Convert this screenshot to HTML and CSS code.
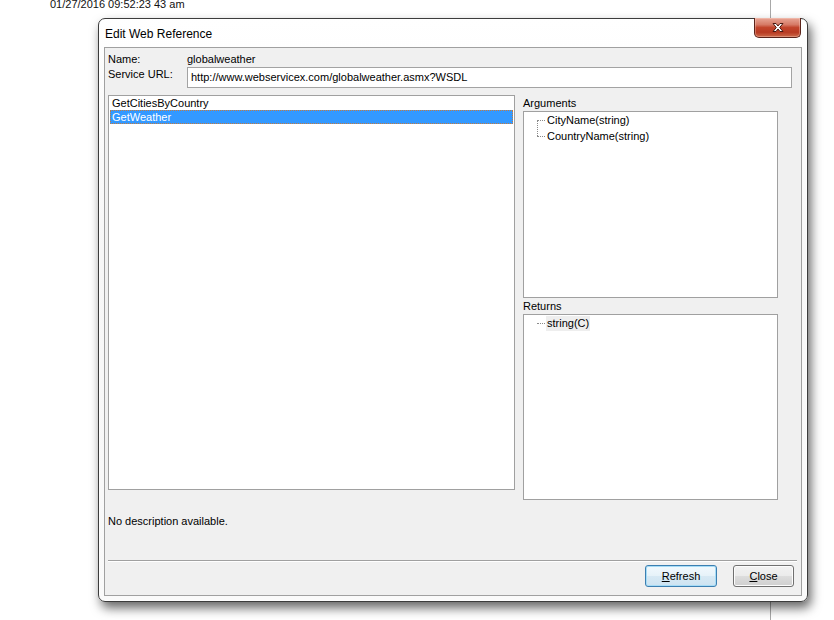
FILE: index.html
```html
<!DOCTYPE html>
<html>
<head>
<meta charset="utf-8">
<link rel="stylesheet" href="styles.css">
</head>
<body>
<div class="desktop">
  <div class="stamp">01/27/2016 09:52:23 43 am</div>
  <div class="rightpane"></div>
  <div class="window">
    <div class="titlebar">
      <span class="title">Edit Web Reference</span>
      <div class="xbtn">
        <svg width="14" height="11" viewBox="0 0 14 11">
          <path d="M2 1.5 L5 1.5 L7 4 L9 1.5 L12 1.5 L8.7 5.5 L12 9.5 L9 9.5 L7 7 L5 9.5 L2 9.5 L5.3 5.5 Z" fill="#fff" stroke="#4a1a12" stroke-width="1" stroke-linejoin="round"/>
        </svg>
      </div>
    </div>
    <div class="client">
      <div class="row name-row"><span class="lbl">Name:</span><span class="val">globalweather</span></div>
      <div class="row url-row"><span class="lbl">Service URL:</span><div class="input">http://www.webservicex.com/globalweather.asmx?WSDL</div></div>
      <div class="main">
        <div class="list">
          <div class="item">GetCitiesByCountry</div>
          <div class="item sel">GetWeather</div>
        </div>
        <div class="side">
          <div class="cap">Arguments</div>
          <div class="tree args">
            <div class="node first"><span class="txt">CityName(string)</span></div>
            <div class="node last"><span class="txt">CountryName(string)</span></div>
          </div>
          <div class="cap">Returns</div>
          <div class="tree rets">
            <div class="node only"><span class="txt hl">string(C)</span></div>
          </div>
        </div>
      </div>
      <div class="desc">No description available.</div>
      <div class="sep"></div>
      <div class="buttons">
        <div class="btn default"><u>R</u>efresh</div>
        <div class="btn close"><u>C</u>lose</div>
      </div>
    </div>
  </div>
</div>
</body>
</html>
```

FILE: styles.css
```css
html, body {
  margin: 0;
  padding: 0;
  background: #ffffff;
}
.desktop {
  position: relative;
  width: 834px;
  height: 620px;
  overflow: hidden;
  font-family: "Liberation Sans", Arial, sans-serif;
  font-size: 11px;
  color: #000;
}
.stamp {
  margin: -2px 0 0 50px;
  font-family: "Liberation Sans", Arial, sans-serif;
  font-size: 11px;
  line-height: 12px;
  color: #111;
}
.rightpane {
  position: absolute;
  left: 770px;
  top: 0;
  width: 64px;
  height: 620px;
  border-left: 1px solid #a8a8a8;
  background: #ffffff;
}
.window {
  position: absolute;
  left: 98px;
  top: 18px;
  width: 710px;
  height: 584px;
  box-sizing: border-box;
  border: 1px solid #3c3c3c;
  border-radius: 7px;
  padding: 0 5px 5px 5px;
  background: linear-gradient(180deg, #ffffff 0%, #f7f7f7 40%, #fafafa 100%);
  box-shadow: 3px 6px 11px rgba(0, 0, 0, 0.6), 0 0 0 1px rgba(255,255,255,0.6) inset;
}
.titlebar {
  height: 28px;
  display: flex;
  align-items: center;
  padding-left: 1px;
}
.title {
  font-family: "Liberation Sans", Arial, sans-serif;
  font-size: 12px;
  color: #000;
  margin-top: 1px;
}
.xbtn {
  position: absolute;
  top: -1px;
  right: 6px;
  width: 47px;
  height: 20px;
  box-sizing: border-box;
  border: 1px solid #5b231a;
  border-top: none;
  border-radius: 0 0 5px 5px;
  background: linear-gradient(180deg, #e8a696 0%, #d67a66 35%, #c2452c 50%, #b83a22 75%, #cc6a4a 100%);
  display: flex;
  align-items: center;
  justify-content: center;
  box-shadow: inset 0 0 0 1px rgba(255, 220, 210, 0.35);
}
.client {
  height: 549px;
  box-sizing: border-box;
  border: 1px solid #a0a0a0;
  background: #f0f0f0;
  padding: 0 4px 0 3px;
  display: flex;
  flex-direction: column;
}
.row {
  display: flex;
  align-items: flex-start;
}
.lbl {
  width: 79px;
  flex: none;
  line-height: 14px;
}
.name-row {
  margin-top: 4px;
  line-height: 14px;
}
.url-row {
  margin-top: 1px;
}
.input {
  flex: 1;
  margin-right: 5px;
  height: 21px;
  box-sizing: border-box;
  border: 1px solid #a3a3a3;
  background: #fff;
  padding: 0 3px;
  line-height: 19px;
  font-size: 11px;
}
.main {
  margin-top: 7px;
  display: flex;
  align-items: flex-start;
}
.list {
  width: 407px;
  height: 395px;
  box-sizing: border-box;
  border: 1px solid #a0a0a0;
  background: #fff;
  padding: 0 1px;
}
.item {
  height: 14px;
  line-height: 14px;
  padding-left: 2px;
}
.item:first-child {
  margin-top: 0;
}
.item.sel {
  background: #3399ff;
  color: #fff;
  outline: 1px dotted #c87a3a;
  outline-offset: -1px;
}
.side {
  margin-left: 8px;
  width: 255px;
  display: flex;
  flex-direction: column;
}
.cap {
  height: 16px;
  line-height: 16px;
}
.tree {
  box-sizing: border-box;
  border: 1px solid #a0a0a0;
  background: #fff;
  padding-top: 0;
}
.tree.args {
  height: 187px;
}
.tree.rets {
  height: 186px;
}
.node {
  position: relative;
  height: 16px;
  line-height: 16px;
  padding-left: 22px;
}
.node::before {
  content: "";
  position: absolute;
  left: 13px;
  top: 8px;
  width: 8px;
  border-top: 1px dotted #8a8a8a;
}
.node.first::after {
  content: "";
  position: absolute;
  left: 13px;
  top: 8px;
  height: 16px;
  border-left: 1px dotted #8a8a8a;
}
.txt {
  padding: 0 1px;
}
.txt.hl {
  background: #eeeeee;
  display: inline-block;
  line-height: 15px;
}
.desc {
  margin-top: 14px;
  line-height: 14px;
}
.sep {
  margin-top: 32px;
  height: 1px;
  background: #a0a0a0;
  border-bottom: 1px solid #ffffff;
}
.buttons {
  margin-top: 3px;
  display: flex;
  justify-content: flex-end;
  padding-right: 3px;
  gap: 16px;
}
.btn {
  height: 22px;
  box-sizing: border-box;
  border-radius: 3px;
  display: flex;
  align-items: center;
  justify-content: center;
  font-size: 11px;
}
.btn.default {
  width: 72px;
  border: 1px solid #3c7fb1;
  background: linear-gradient(180deg, #f2f9fd 0%, #e6f2f9 50%, #d7e9f4 51%, #cde3f1 100%);
  box-shadow: inset 0 0 0 1px #a6dcf6;
}
.btn.close {
  width: 61px;
  border: 1px solid #707070;
  background: linear-gradient(180deg, #f2f2f2 0%, #ebebeb 50%, #dddddd 51%, #cfcfcf 100%);
  box-shadow: inset 0 0 0 1px #fcfcfc;
}
.btn u {
  text-decoration: underline;
}
```
